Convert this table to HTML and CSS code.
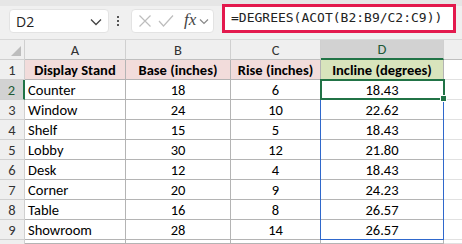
FILE: index.html
```html
<!DOCTYPE html>
<html>
<head>
<meta charset="utf-8">
<link rel="stylesheet" href="styles.css">
</head>
<body>
<div class="toolbar">
  <div class="namebox">
    <span class="name">D2</span>
    <svg class="chev" width="12" height="8" viewBox="0 0 12 8"><polyline points="1,1.5 6,6.5 11,1.5" fill="none" stroke="#444" stroke-width="1.3"/></svg>
  </div>
  <div class="dots"><i></i><i></i><i></i></div>
  <div class="fxbox">
    <svg width="14" height="14" viewBox="0 0 14 14"><path d="M1.5 1.5 L12.5 12.5 M12.5 1.5 L1.5 12.5" stroke="#bdbdbd" stroke-width="1.2" fill="none"/></svg>
    <svg width="16" height="14" viewBox="0 0 16 14"><polyline points="1,7 5.5,12 15,1.5" stroke="#bdbdbd" stroke-width="1.2" fill="none"/></svg>
    <span class="fx">fx</span>
    <svg class="chev2" width="10" height="7" viewBox="0 0 10 7"><polyline points="1,1.5 5,5.5 9,1.5" fill="none" stroke="#888" stroke-width="1.2"/></svg>
  </div>
  <div class="formula">=DEGREES(ACOT(B2:B9/C2:C9))</div>
</div>
<div class="sheet">
  <div class="hd corner"><span class="tri"></span></div>
  <div class="hd col">A</div>
  <div class="hd col">B</div>
  <div class="hd col">C</div>
  <div class="hd col selcol">D</div>
  <div class="hd col last"></div>

  <div class="hd row">1</div>
  <div class="c th pink">Display Stand</div>
  <div class="c th pink">Base (inches)</div>
  <div class="c th pink">Rise (inches)</div>
  <div class="c th green">Incline (degrees)</div>
  <div class="c e"></div>

  <div class="hd row selrow">2</div>
  <div class="c l">Counter</div><div class="c">18</div><div class="c">6</div><div class="c">18.43</div><div class="c e"></div>
  <div class="hd row">3</div>
  <div class="c l">Window</div><div class="c">24</div><div class="c">10</div><div class="c">22.62</div><div class="c e"></div>
  <div class="hd row">4</div>
  <div class="c l">Shelf</div><div class="c">15</div><div class="c">5</div><div class="c">18.43</div><div class="c e"></div>
  <div class="hd row">5</div>
  <div class="c l">Lobby</div><div class="c">30</div><div class="c">12</div><div class="c">21.80</div><div class="c e"></div>
  <div class="hd row">6</div>
  <div class="c l">Desk</div><div class="c">12</div><div class="c">4</div><div class="c">18.43</div><div class="c e"></div>
  <div class="hd row">7</div>
  <div class="c l">Corner</div><div class="c">20</div><div class="c">9</div><div class="c">24.23</div><div class="c e"></div>
  <div class="hd row">8</div>
  <div class="c l">Table</div><div class="c">16</div><div class="c">8</div><div class="c">26.57</div><div class="c e"></div>
  <div class="hd row">9</div>
  <div class="c l">Showroom</div><div class="c">28</div><div class="c">14</div><div class="c">26.57</div><div class="c e"></div>

  <div class="hd row tail"></div>
  <div class="c"></div><div class="c"></div><div class="c"></div><div class="c"></div><div class="c e"></div>

  <div class="range"></div>
  <div class="active"><span class="handle"></span></div>
</div>
</body>
</html>
```
FILE: styles.css
```css
html, body {
  margin: 0;
  padding: 0;
  background: #ffffff;
  width: 462px;
  height: 244px;
  overflow: hidden;
}

.toolbar {
  height: 40px;
  box-sizing: border-box;
  background: #f0f0f0;
  border-bottom: 1px solid #d8d8d8;
  display: flex;
  align-items: flex-start;
  padding-left: 9px;
  background-image: linear-gradient(#e6e6e6, #e6e6e6);
  background-size: 100% 6px;
  background-repeat: no-repeat;
}

.namebox {
  margin-top: 9px;
  width: 100px;
  height: 24px;
  box-sizing: border-box;
  background: #fff;
  border: 1px solid #e3e3e3;
  border-radius: 4px;
  display: flex;
  align-items: center;
  justify-content: space-between;
  padding: 0 6px 0 6px;
  font-family: "Open Sans", "Noto Sans", sans-serif;
  font-size: 14px;
  color: #222;
}

.chev { margin-top: 1px; }

.dots {
  margin: 16px 0 0 8px;
  width: 4px;
  display: flex;
  flex-direction: column;
  gap: 2px;
}
.dots i {
  display: block;
  width: 2px;
  height: 2px;
  background: #555;
}

.fxbox {
  margin: 9px 0 0 10px;
  width: 83px;
  height: 24px;
  box-sizing: border-box;
  background: #fff;
  border: 1px solid #e3e3e3;
  border-radius: 4px;
  display: flex;
  align-items: center;
  padding-left: 6px;
  gap: 6px;
}
.fx {
  font-family: "Liberation Serif", serif;
  font-style: italic;
  font-size: 17px;
  color: #444;
  margin-left: 4px;
  margin-top: -2px;
}
.chev2 { margin-left: -3px; }

.formula {
  margin: 4px 0 0 8px;
  width: 234px;
  height: 29px;
  box-sizing: border-box;
  border: 3px solid #e3194d;
  background: #fff;
  font-family: "DejaVu Sans Mono", monospace;
  font-size: 13px;
  line-height: 22px;
  padding-left: 6px;
  color: #222;
  white-space: nowrap;
}

.sheet {
  position: relative;
  display: grid;
  grid-template-columns: 25px 101px 105px 90px 123px 18px;
  grid-template-rows: 20px repeat(9, 20px) 4px;
  font-family: Carlito, Calibri, Lato, "Noto Sans", sans-serif;
  font-size: 14.5px;
}

.hd {
  background: #efefef;
  color: #333;
  display: flex;
  align-items: center;
  justify-content: center;
  box-sizing: border-box;
  border-right: 1px solid #d0d0d0;
  border-bottom: 1px solid #d0d0d0;
}
.hd.tail { border-bottom: none; }
.corner {
  justify-content: flex-end;
  align-items: flex-end;
  padding: 0 3px 3px 0;
}
.tri {
  width: 0;
  height: 0;
  border-left: 10px solid transparent;
  border-bottom: 10px solid #bdbdbd;
}
.col { border-bottom: 1px solid #bfbfbf; }
.col.last { border-right: none; }
.selcol {
  background: #d2d2d2;
  color: #1f5a36;
  border-bottom: 2px solid #217346;
}
.selrow {
  background: #d2d2d2;
  color: #1f5a36;
  border-right: 2px solid #217346;
}

.c {
  box-sizing: border-box;
  border-right: 1px solid #b4b4b4;
  border-bottom: 1px solid #b4b4b4;
  display: flex;
  align-items: center;
  justify-content: center;
  color: #000;
  white-space: nowrap;
  overflow: hidden;
}
.c.l { justify-content: flex-start; padding-left: 3px; }
.c.e { border-right: none; border-bottom: 1px solid #e1e1e1; }
.th { font-weight: bold; }
.pink { background: #f2dcdb; }
.green { background: #d8e4bc; }

.range {
  position: absolute;
  grid-column: 5 / 6;
  grid-row: 3 / 11;
  top: -1px;
  left: -1px;
  right: 0;
  bottom: 0;
  border: 1px solid #2f68cc;
  pointer-events: none;
}
.active {
  position: absolute;
  grid-column: 5 / 6;
  grid-row: 3 / 4;
  top: -1px;
  left: -1px;
  right: -1px;
  bottom: 0;
  border: 2px solid #217346;
}
.handle {
  position: absolute;
  right: -4px;
  bottom: -4px;
  width: 5px;
  height: 5px;
  background: #217346;
  border: 1px solid #fff;
}
```
